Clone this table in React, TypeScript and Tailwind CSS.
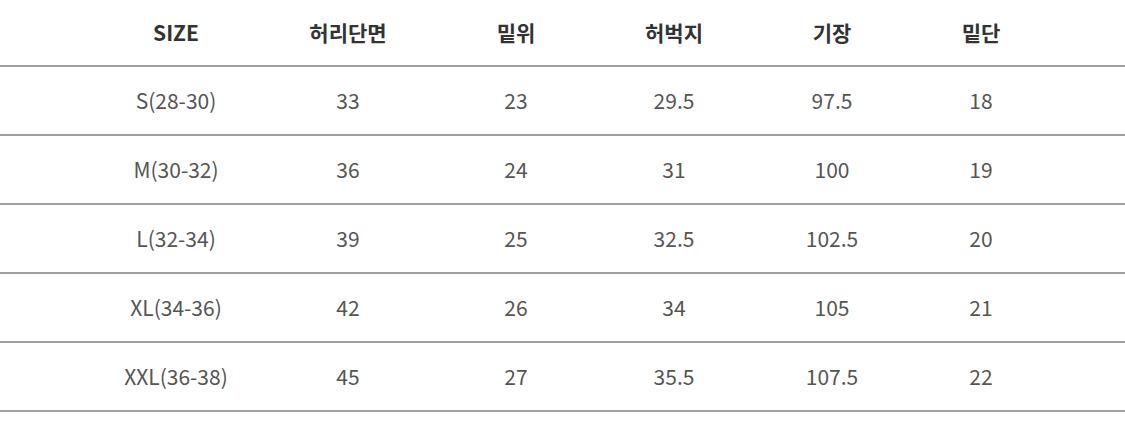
const headers = ['SIZE', '허리단면', '밑위', '허벅지', '기장', '밑단']

const rows = [
  ['S(28-30)', '33', '23', '29.5', '97.5', '18'],
  ['M(30-32)', '36', '24', '31', '100', '19'],
  ['L(32-34)', '39', '25', '32.5', '102.5', '20'],
  ['XL(34-36)', '42', '26', '34', '105', '21'],
  ['XXL(36-38)', '45', '27', '35.5', '107.5', '22'],
]

const cols = 'grid grid-cols-[172px_172px_164px_152px_164px_134px] pl-[90px]'

export default function App() {
  return (
    <div
      className="w-[1125px] h-[438px] bg-white overflow-hidden"
      style={{ fontFamily: '"Noto Sans CJK KR", "Noto Sans", sans-serif' }}
    >
      <div className={`${cols} h-[65px] items-center`}>
        {headers.map(h => (
          <div key={h} className="text-center text-[21px] font-bold text-[#333]">{h}</div>
        ))}
      </div>
      {rows.map((r, i) => (
        <div key={i} className="border-t-2 border-[#a0a0a0]">
          <div className={`${cols} h-[67px] items-center`}>
            {r.map((c, j) => (
              <div key={j} className="text-center text-[21px] text-[#555]">{c}</div>
            ))}
          </div>
        </div>
      ))}
      <div className="border-t-2 border-[#a0a0a0]" />
    </div>
  )
}
